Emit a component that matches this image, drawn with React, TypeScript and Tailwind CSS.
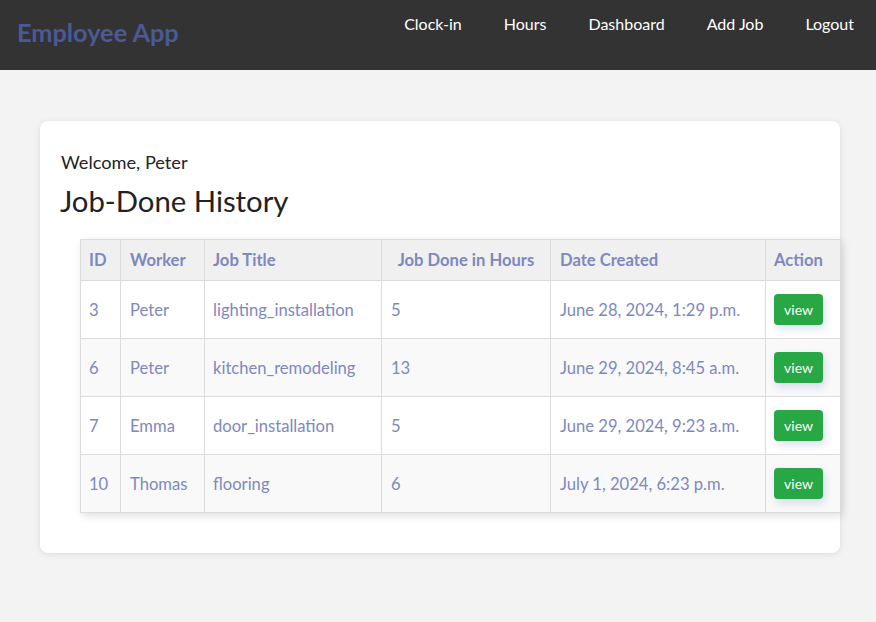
import React from "react";

const rows = [
  { id: "3", worker: "Peter", title: "lighting_installation", hours: "5", date: "June 28, 2024, 1:29 p.m." },
  { id: "6", worker: "Peter", title: "kitchen_remodeling", hours: "13", date: "June 29, 2024, 8:45 a.m." },
  { id: "7", worker: "Emma", title: "door_installation", hours: "5", date: "June 29, 2024, 9:23 a.m." },
  { id: "10", worker: "Thomas", title: "flooring", hours: "6", date: "July 1, 2024, 6:23 p.m." },
];

export default function App() {
  return (
    <div className="min-h-[622px] bg-[#f3f3f3]" style={{ fontFamily: "Lato, 'Noto Sans', sans-serif" }}>
      <header className="h-[70px] bg-[#333333] flex justify-between items-start">
        <div className="pl-[17px] pt-[16px] text-[25.3px] font-bold text-[#4a5a96] leading-[32px]">Employee App</div>
        <nav className="flex gap-[42px] pr-[22px] pt-[13px] text-[16px] text-white leading-[22px]">
          <a>Clock-in</a>
          <a>Hours</a>
          <a>Dashboard</a>
          <a>Add Job</a>
          <a>Logout</a>
        </nav>
      </header>
      <main className="pl-10 pr-9 pt-[51px]">
        <div className="bg-white rounded-lg shadow-[0_1px_6px_rgba(0,0,0,0.1)] pt-[29px] pb-[40px] px-5">
          <p className="text-[18.2px] text-[#222] leading-[24px] pl-[1px]">Welcome, Peter</p>
          <h1 className="mt-[10px] text-[29.3px] text-[#222] leading-[34px]">Job-Done History</h1>
          <table className="mt-[21px] ml-5 w-[760px] table-fixed border-collapse shadow-[2px_3px_8px_rgba(0,0,0,0.12)] text-[16.6px] text-[#7d88bf]">
            <colgroup>
              <col className="w-[40px]" />
              <col className="w-[84px]" />
              <col className="w-[177px]" />
              <col className="w-[169px]" />
              <col className="w-[215px]" />
              <col className="w-[75px]" />
            </colgroup>
            <thead>
              <tr className="bg-[#f0f0f0] h-[41px]">
                <th className="border border-[#dcdcdc] text-left pl-[8px] font-bold">ID</th>
                <th className="border border-[#dcdcdc] text-left pl-[9px] font-bold">Worker</th>
                <th className="border border-[#dcdcdc] text-left pl-[8px] font-bold">Job Title</th>
                <th className="border border-[#dcdcdc] text-center font-bold">Job Done in Hours</th>
                <th className="border border-[#dcdcdc] text-left pl-[9px] font-bold">Date Created</th>
                <th className="border border-[#dcdcdc] text-left pl-[8px] font-bold">Action</th>
              </tr>
            </thead>
            <tbody>
              {rows.map((r, i) => (
                <tr key={r.id} className={`h-[58px] ${i % 2 === 1 ? "bg-[#f9f9f9]" : "bg-white"}`}>
                  <td className="border border-[#dcdcdc] pl-[8px] pt-[1px]">{r.id}</td>
                  <td className="border border-[#dcdcdc] pl-[9px] pt-[1px]">{r.worker}</td>
                  <td className="border border-[#dcdcdc] pl-[8px] pt-[1px]">{r.title}</td>
                  <td className="border border-[#dcdcdc] pl-[9px] pt-[1px]">{r.hours}</td>
                  <td className="border border-[#dcdcdc] pl-[9px] pt-[1px]">{r.date}</td>
                  <td className="border border-[#dcdcdc] pl-[8px]">
                    <button className="w-[49px] h-[31px] rounded bg-[#28a745] text-white text-[14px] shadow-[2px_4px_8px_rgba(80,100,180,0.2)]">view</button>
                  </td>
                </tr>
              ))}
            </tbody>
          </table>
        </div>
      </main>
    </div>
  );
}
